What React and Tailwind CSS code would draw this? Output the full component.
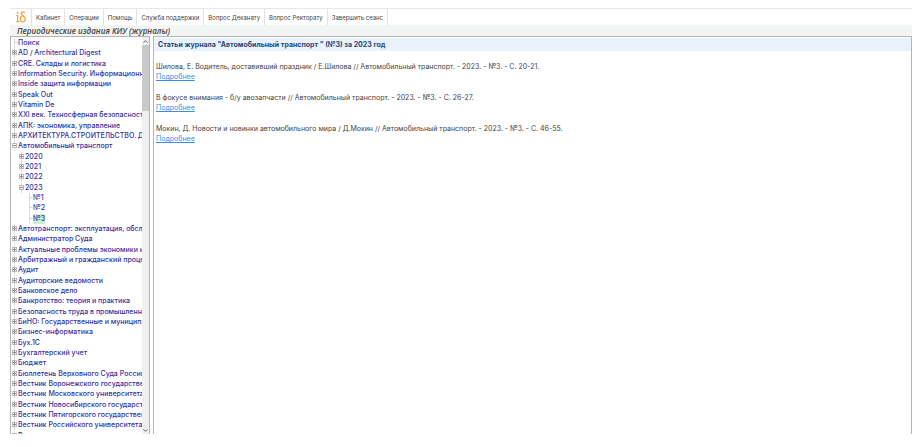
import { ChevronUp, ChevronDown } from "lucide-react";

const menu = [
  "Кабинет",
  "Операции",
  "Помощь",
  "Служба поддержки",
  "Вопрос Деканату",
  "Вопрос Ректорату",
  "Завершить сеанс",
];

const tree = [
  { title: "Поиск", level: 0, kind: "leaf" },
  { title: "AD / Architectural Digest", level: 0 },
  { title: "CRE. Склады и логистика", level: 0 },
  { title: "Information Security. Информационная безопасность", level: 0 },
  { title: "Inside защита информации", level: 0 },
  { title: "Speak Out", level: 0 },
  { title: "Vitamin De", level: 0 },
  { title: "XXI век. Техносферная безопасность", level: 0 },
  { title: "АПК: экономика, управление", level: 0 },
  { title: "АРХИТЕКТУРА.СТРОИТЕЛЬСТВО. ДИЗАЙН", level: 0 },
  { title: "Автомобильный транспорт", level: 0, kind: "open" },
  { title: "2020", level: 1 },
  { title: "2021", level: 1 },
  { title: "2022", level: 1 },
  { title: "2023", level: 1, kind: "open" },
  { title: "№1", level: 2, kind: "leaf" },
  { title: "№2", level: 2, kind: "leaf" },
  { title: "№3", level: 2, kind: "leaf", selected: true },
  { title: "Автотранспорт: эксплуатация, обслуживание", level: 0 },
  { title: "Администратор Суда", level: 0 },
  { title: "Актуальные проблемы экономики и права", level: 0 },
  { title: "Арбитражный и гражданский процесс", level: 0 },
  { title: "Аудит", level: 0 },
  { title: "Аудиторские ведомости", level: 0 },
  { title: "Банковское дело", level: 0 },
  { title: "Банкротство: теория и практика", level: 0 },
  { title: "Безопасность труда в промышленности", level: 0 },
  { title: "БиНО: Государственные и муниципальные", level: 0 },
  { title: "Бизнес-информатика", level: 0 },
  { title: "Бух.1С", level: 0 },
  { title: "Бухгалтерский учет", level: 0 },
  { title: "Бюджет", level: 0 },
  { title: "Бюллетень Верховного Суда России", level: 0 },
  { title: "Вестник Воронежского государственного", level: 0 },
  { title: "Вестник Московского университета", level: 0 },
  { title: "Вестник Новосибирского государственного", level: 0 },
  { title: "Вестник Пятигорского государственного", level: 0 },
  { title: "Вестник Российского университета", level: 0 },
  { title: "Вестник государственного социального", level: 0 },
];

const articles = [
  "Шилова, Е. Водитель, доставивший праздник / Е.Шилова // Автомобильный транспорт. - 2023. - №3. - С. 20-21.",
  "В фокусе внимания - б/у авозапчасти // Автомобильный транспорт. - 2023. - №3. - С. 26-27.",
  "Мокин, Д. Новости и новинки автомобильного мира / Д.Мокин // Автомобильный транспорт. - 2023. - №3. - С. 46-55.",
];

const indent = ["pl-0", "pl-[7px]", "pl-[15px]"];

function Logo() {
  return (
    <svg viewBox="0 0 10 12" className="h-3 w-[10px]" fill="none" stroke="#f0a23c" strokeWidth="1.2" aria-label="Логотип">
      <path d="M0.3 4.5h1.4v5.5M0.3 10.6h3" />
      <circle cx="1.7" cy="2" r="0.9" fill="#f0a23c" stroke="none" />
      <path d="M9 2C8 0.6 5 0.8 5.3 2.6C5.6 4.2 9.3 5.2 9.3 8C9.3 9.8 8.3 10.8 6.7 10.8S4.2 9.8 4.2 8S5.3 5 6.8 4.8" />
    </svg>
  );
}

function Marker({ kind }) {
  return (
    <svg viewBox="0 0 7 10" className="h-[10px] w-[7px] shrink-0" fill="none" aria-hidden="true">
      <path d="M3.5 0v10" stroke="#dcdcdc" />
      {kind === "leaf" ? (
        <path d="M3.5 4.5h3" stroke="#d4d4d4" />
      ) : (
        <>
          <rect x="1.5" y="2.5" width="4" height="4" fill="#fff" stroke="#b8b8b8" />
          <path d={kind === "open" ? "M2 4.5h3" : "M2 4.5h3M3.5 3v3"} stroke="#8a8a8a" />
        </>
      )}
    </svg>
  );
}

function TreeRow({ title, level, kind, selected }) {
  return (
    <li className={`flex h-[10px] items-center nth-[3n]:h-[11px] ${indent[level]}`}>
      <Marker kind={kind} />
      <a href="#" className={`whitespace-nowrap leading-[10px] ${selected ? "bg-[#cdf3d3]" : ""}`}>
        {title}
      </a>
    </li>
  );
}

function Scrollbar() {
  return (
    <div className="flex w-[7px] shrink-0 flex-col bg-[#f0f0f0] text-[#555]">
      <button className="flex h-2 items-center justify-center" aria-label="Вверх">
        <ChevronUp className="size-[7px]" strokeWidth={3} />
      </button>
      <div className="h-[66px] bg-[#c9c9c9]" />
      <button className="mt-auto flex h-2 items-center justify-center" aria-label="Вниз">
        <ChevronDown className="size-[7px]" strokeWidth={3} />
      </button>
    </div>
  );
}

export default function App() {
  return (
    <div className="flex h-screen flex-col bg-white pt-2 pr-2 pb-[13px] pl-[10px] font-['Inter',sans-serif] text-[7px] text-[#444]">
      <nav className="flex h-[17px] shrink-0 border-t border-[#e8e8e8] text-[6px]">
        <a href="#" className="flex w-[22px] items-center justify-center border-r border-[#e2e2e2]">
          <Logo />
        </a>
        {menu.map((item) => (
          <button key={item} className="border-r border-[#e2e2e2] px-1 whitespace-nowrap">
            {item}
          </button>
        ))}
      </nav>

      <h1 className="h-[11px] shrink-0 bg-[#f3f5f4] pl-[7px] font-['Open_Sans',sans-serif] text-[8px] leading-[11px] font-semibold italic">
        Периодические издания КИУ (журналы)
      </h1>

      <div className="flex min-h-0 flex-1 gap-[3px]">
        <aside className="flex w-[140px] shrink-0 border-x border-t border-[#b5b5b5]">
          <ul className="min-w-0 flex-1 overflow-hidden pt-px font-medium text-[#32329f]">
            {tree.map((node) => (
              <TreeRow key={node.title} {...node} />
            ))}
          </ul>
          <Scrollbar />
        </aside>

        <main className="min-w-0 flex-1 border-x border-t border-[#b5b5b5]">
          <h2 className="mt-px h-[13px] bg-[#eaf2fb] pl-1 leading-[13px] font-bold text-[#1f4777]">
            Статьи журнала "Автомобильный транспорт " (№3) за 2023 год
          </h2>
          <div className="mt-[11px] flex flex-col gap-[11px] pl-0.5 leading-[10px]">
            {articles.map((text) => (
              <article key={text}>
                <p>{text}</p>
                <a href="#" className="text-[#3b8bea] underline">
                  Подробнее
                </a>
              </article>
            ))}
          </div>
        </main>
      </div>
    </div>
  );
}
